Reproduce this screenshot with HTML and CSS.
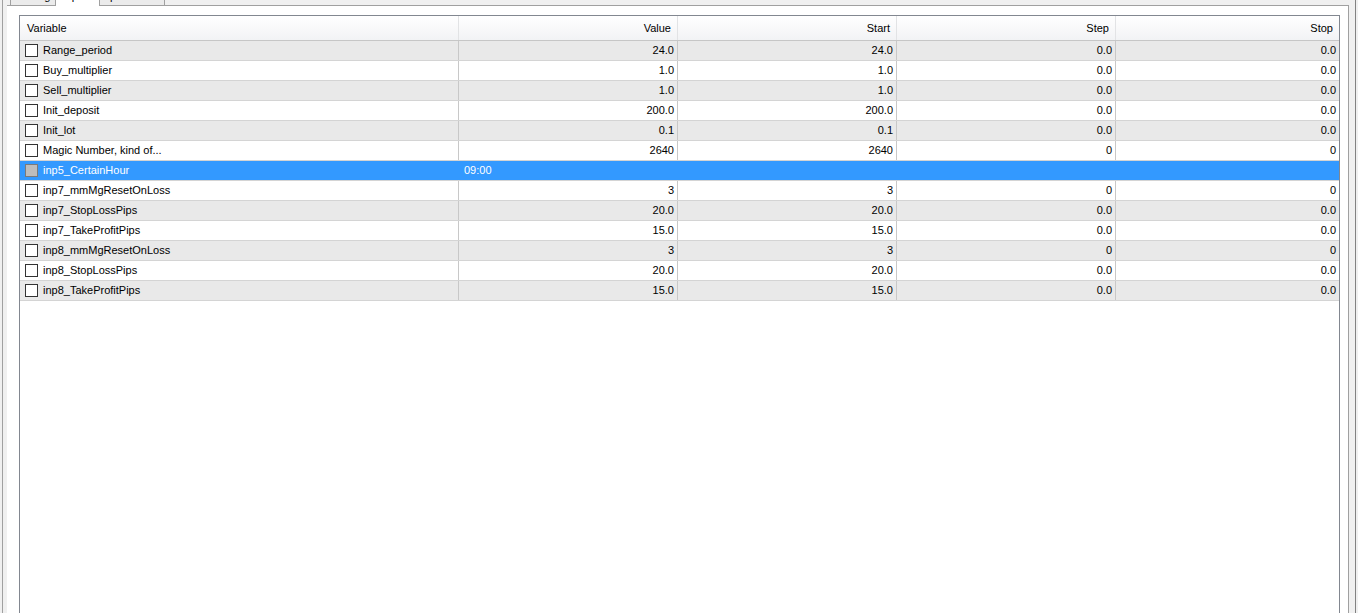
FILE: index.html
```html
<!DOCTYPE html>
<html lang="en">
<head>
  <meta charset="UTF-8">
  <title>Expert properties - Inputs</title>
  <link rel="stylesheet" href="styles.css">
</head>
<body>
  <div class="frame">
    <!-- TABS -->
    <div class="tabs">
      <div class="tab-edge"></div>
      <div class="tab tab-testing">Testing</div>
      <div class="tab tab-inputs active">Inputs</div>
      <div class="tab tab-optim">Optimization</div>
      <div class="tab-fill"></div>
    </div>

    <!-- INPUTS PANEL -->
    <div class="panel">
      <div class="listview">
        <div class="lv-row lv-head">
          <div class="cell">Variable</div>
          <div class="cell num">Value</div>
          <div class="cell num">Start</div>
          <div class="cell num">Step</div>
          <div class="cell num">Stop</div>
        </div>

        <div class="lv-row alt">
          <div class="cell name"><span class="check"></span>Range_period</div>
          <div class="cell num">24.0</div><div class="cell num">24.0</div><div class="cell num">0.0</div><div class="cell num">0.0</div>
        </div>
        <div class="lv-row">
          <div class="cell name"><span class="check"></span>Buy_multiplier</div>
          <div class="cell num">1.0</div><div class="cell num">1.0</div><div class="cell num">0.0</div><div class="cell num">0.0</div>
        </div>
        <div class="lv-row alt">
          <div class="cell name"><span class="check"></span>Sell_multiplier</div>
          <div class="cell num">1.0</div><div class="cell num">1.0</div><div class="cell num">0.0</div><div class="cell num">0.0</div>
        </div>
        <div class="lv-row">
          <div class="cell name"><span class="check"></span>Init_deposit</div>
          <div class="cell num">200.0</div><div class="cell num">200.0</div><div class="cell num">0.0</div><div class="cell num">0.0</div>
        </div>
        <div class="lv-row alt">
          <div class="cell name"><span class="check"></span>Init_lot</div>
          <div class="cell num">0.1</div><div class="cell num">0.1</div><div class="cell num">0.0</div><div class="cell num">0.0</div>
        </div>
        <div class="lv-row">
          <div class="cell name"><span class="check"></span>Magic Number, kind of...</div>
          <div class="cell num">2640</div><div class="cell num">2640</div><div class="cell num">0</div><div class="cell num">0</div>
        </div>
        <div class="lv-row selected">
          <div class="cell name"><span class="check"></span>inp5_CertainHour</div>
          <div class="cell">09:00</div><div class="cell"></div><div class="cell"></div><div class="cell"></div>
        </div>
        <div class="lv-row">
          <div class="cell name"><span class="check"></span>inp7_mmMgResetOnLoss</div>
          <div class="cell num">3</div><div class="cell num">3</div><div class="cell num">0</div><div class="cell num">0</div>
        </div>
        <div class="lv-row alt">
          <div class="cell name"><span class="check"></span>inp7_StopLossPips</div>
          <div class="cell num">20.0</div><div class="cell num">20.0</div><div class="cell num">0.0</div><div class="cell num">0.0</div>
        </div>
        <div class="lv-row">
          <div class="cell name"><span class="check"></span>inp7_TakeProfitPips</div>
          <div class="cell num">15.0</div><div class="cell num">15.0</div><div class="cell num">0.0</div><div class="cell num">0.0</div>
        </div>
        <div class="lv-row alt">
          <div class="cell name"><span class="check"></span>inp8_mmMgResetOnLoss</div>
          <div class="cell num">3</div><div class="cell num">3</div><div class="cell num">0</div><div class="cell num">0</div>
        </div>
        <div class="lv-row">
          <div class="cell name"><span class="check"></span>inp8_StopLossPips</div>
          <div class="cell num">20.0</div><div class="cell num">20.0</div><div class="cell num">0.0</div><div class="cell num">0.0</div>
        </div>
        <div class="lv-row alt">
          <div class="cell name"><span class="check"></span>inp8_TakeProfitPips</div>
          <div class="cell num">15.0</div><div class="cell num">15.0</div><div class="cell num">0.0</div><div class="cell num">0.0</div>
        </div>
      </div>
    </div>
  </div>
</body>
</html>
```

FILE: styles.css
```css
/* === WINDOW === */
body {
  margin: 0;
  padding: 0 0 0 2px;
  height: 613px;
  overflow: hidden;
  background: #f0f0f0;
  font-family: 'Liberation Sans', Arial, sans-serif;
  font-size: 11px;
  color: #000;
}

.frame {
  width: 1342px;
  height: 613px;
  padding: 0 6px 0 4px;
  border-left: 1px solid #a0a0a0;
  border-right: 1px solid #828282;
  display: flex;
  flex-direction: column;
  background: #f0f0f0;
}

/* === TABS === */
.tabs {
  display: flex;
  align-items: flex-end;
  height: 6px;
  overflow: hidden;
}

.tab-edge {
  width: 3px;
  height: 0;
  border-bottom: 1px solid #a0a0a0;
}

.tab-fill {
  flex: 1;
  height: 0;
  border-bottom: 1px solid #a0a0a0;
}

.tab {
  height: 18px;
  line-height: 14px;
  box-sizing: border-box;
  background: #ebebeb;
  border: 1px solid #a0a0a0;
  border-right: none;
  white-space: nowrap;
  overflow: hidden;
  text-align: center;
  color: #000;
}

.tab-testing {
  width: 45px;
}

.tab-inputs {
  width: 44px;
}

.tab-optim {
  width: 66px;
  border-right: 1px solid #a0a0a0;
}

.tab.active {
  background: #fff;
  border-bottom: none;
}

/* === PANEL === */
.panel {
  flex: 1;
  background: #fff;
  border-right: 1px solid #a0a0a0;
  padding: 9px 8px 0 12px;
  display: flex;
  flex-direction: column;
  min-height: 0;
}

.listview {
  flex: 1;
  border: 1px solid #828790;
  border-bottom: none;
  background: #fff;
}

/* === ROWS === */
.lv-row {
  display: grid;
  grid-template-columns: 439px 219px 219px 219px 1fr;
  height: 20px;
  box-sizing: border-box;
  border-bottom: 1px solid #d4d4d4;
}

.lv-row.alt {
  background: #e9e9e9;
}

.lv-row.selected {
  background: #3399ff;
  color: #fff;
}

.cell {
  box-sizing: border-box;
  border-right: 1px solid #c8c8c8;
  padding: 0 5px;
  line-height: 19px;
  white-space: nowrap;
  overflow: hidden;
}

.cell:last-child {
  border-right: none;
}

.lv-row.selected .cell {
  border-right-color: #3399ff;
}

.cell.num {
  text-align: right;
  padding-right: 3px;
}

.cell.name {
  display: flex;
  align-items: center;
}

.check {
  width: 13px;
  height: 13px;
  box-sizing: border-box;
  border: 1px solid #333;
  background: #fff;
  margin-right: 5px;
  flex: none;
}

.lv-row.selected .check {
  background: #bdbdbd;
  border-color: #7a7a7a;
}

/* === HEADER === */
.lv-head {
  height: 25px;
  border-bottom: 1px solid #c6c6c6;
  background: linear-gradient(#ffffff, #f2f3f5);
}

.lv-head .cell {
  line-height: 24px;
  border-right: 1px solid #e2e3e5;
  padding-left: 7px;
}

.lv-head .cell.num {
  padding-right: 6px;
}

.lv-head .cell:last-child {
  border-right: none;
}
```
